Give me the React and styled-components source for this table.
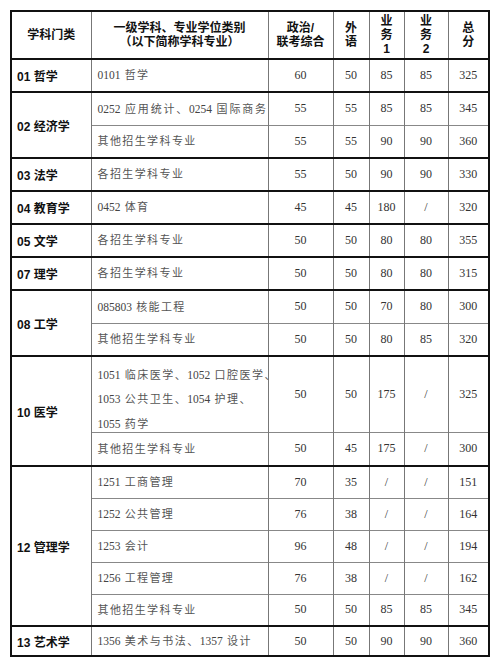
import React from 'react';
import styled, { createGlobalStyle } from 'styled-components';

const Global = createGlobalStyle`
  html, body { margin: 0; padding: 0; background: #fff; }
  body { width: 500px; height: 669px; overflow: hidden; }
`;

const Page = styled.div`
  padding: 10px 0 0 10px;
  background: #fff;
`;

const Table = styled.table`
  border-collapse: collapse;
  table-layout: fixed;
  width: 478px;
  border: 2px solid #111;
`;

const HeadCell = styled.th`
  font-family: "Liberation Sans", "Noto Sans CJK SC", sans-serif;
  font-weight: 700;
  font-size: 12px;
  line-height: 14px;
  color: #111;
  text-align: center;
  vertical-align: middle;
  padding: 0;
  border-left: 1px solid #777;
  border-right: 1px solid #777;
  border-bottom: 2px solid #111;
`;

const Row = styled.tr`
  height: ${p => p.$h}px;
`;

const GroupCell = styled.td`
  font-family: "Liberation Sans", "Noto Sans CJK SC", sans-serif;
  font-weight: 700;
  font-size: 12px;
  color: #111;
  text-align: left;
  vertical-align: middle;
  padding: 0 0 0 5px;
  border-top: 2px solid #111;
  border-right: 1px solid #777;
  white-space: nowrap;
`;

const NameCell = styled.td`
  font-family: "Liberation Serif", "Noto Sans CJK SC", serif;
  font-size: 11px;
  letter-spacing: ${p => p.$ls}px;
  color: #555;
  text-align: left;
  vertical-align: middle;
  padding: 0 0 0 6px;
  white-space: nowrap;
  border-top: ${p => (p.$first ? '2px solid #111' : '1px solid #888')};
  border-left: 1px solid #777;
  border-right: 1px solid #777;
  line-height: 24.5px;
`;

const Code = styled.span`
  letter-spacing: 0;
  font-size: 11.5px;
  color: #444;
`;

const Lines = styled.div`
  margin: 5px 0 -5px;
`;

const Line = styled.div`
  height: 24.5px;
`;

const NumCell = styled.td`
  font-family: "Liberation Serif", serif;
  font-size: 12px;
  color: #333;
  text-align: center;
  vertical-align: middle;
  padding: 0;
  border-top: ${p => (p.$first ? '2px solid #111' : '1px solid #888')};
  border-left: 1px solid #777;
  border-right: 1px solid #777;
`;

const Col = styled.col`
  width: ${p => p.$w}px;
`;

const groups = [
  { name: '01 哲学', rows: [['0101 哲学', 60, 50, 85, 85, 325]] },
  {
    name: '02 经济学',
    rows: [
      ['0252 应用统计、0254 国际商务', 55, 55, 85, 85, 345, 1.8],
      ['其他招生学科专业', 55, 55, 90, 90, 360],
    ],
  },
  { name: '03 法学', rows: [['各招生学科专业', 55, 50, 90, 90, 330]] },
  { name: '04 教育学', rows: [['0452 体育', 45, 45, 180, '/', 320]] },
  { name: '05 文学', rows: [['各招生学科专业', 50, 50, 80, 80, 355]] },
  { name: '07 理学', rows: [['各招生学科专业', 50, 50, 80, 80, 315]] },
  {
    name: '08 工学',
    rows: [
      ['085803 核能工程', 50, 50, 70, 80, 300],
      ['其他招生学科专业', 50, 50, 80, 85, 320],
    ],
  },
  {
    name: '10 医学',
    rows: [
      [['1051 临床医学、1052 口腔医学、', '1053 公共卫生、1054 护理、', '1055 药学'], 50, 50, 175, '/', 325, 1.5],
      ['其他招生学科专业', 50, 45, 175, '/', 300],
    ],
    heights: [76, 34],
  },
  {
    name: '12 管理学',
    rows: [
      ['1251 工商管理', 70, 35, '/', '/', 151],
      ['1252 公共管理', 76, 38, '/', '/', 164],
      ['1253 会计', 96, 48, '/', '/', 194],
      ['1256 工程管理', 76, 38, '/', '/', 162],
      ['其他招生学科专业', 50, 50, 85, 85, 345],
    ],
    heights: [32, 32, 32, 32, 32],
  },
  { name: '13 艺术学', rows: [['1356 美术与书法、1357 设计', 50, 50, 90, 90, 360, 1.5]], heights: [30] },
];

const renderText = s =>
  s.split(/(\d+)/).map((part, i) =>
    /^\d+$/.test(part) ? <Code key={i}>{part}</Code> : part
  );

export default function App() {
  return (
    <Page>
      <Global />
      <Table>
        <colgroup>
          <Col $w={80} />
          <Col $w={177} />
          <Col $w={65} />
          <Col $w={36} />
          <Col $w={35} />
          <Col $w={44} />
          <Col $w={41} />
        </colgroup>
        <thead>
          <Row $h={48}>
            <HeadCell>学科门类</HeadCell>
            <HeadCell>一级学科、专业学位类别<br />（以下简称学科专业）</HeadCell>
            <HeadCell>政治/<br />联考综合</HeadCell>
            <HeadCell>外<br />语</HeadCell>
            <HeadCell>业<br />务<br />1</HeadCell>
            <HeadCell>业<br />务<br />2</HeadCell>
            <HeadCell>总<br />分</HeadCell>
          </Row>
        </thead>
        <tbody>
          {groups.map(g =>
            g.rows.map((r, i) => {
              const [name, a, b, c, d, e, ls] = r;
              const h = g.heights ? g.heights[i] : 33;
              return (
                <Row key={g.name + i} $h={h}>
                  {i === 0 && <GroupCell rowSpan={g.rows.length}>{g.name}</GroupCell>}
                  <NameCell $first={i === 0} $ls={ls ?? 1.4}>
                    {Array.isArray(name) ? (
                      <Lines>{name.map(l => <Line key={l}>{renderText(l)}</Line>)}</Lines>
                    ) : (
                      renderText(name)
                    )}
                  </NameCell>
                  {[a, b, c, d, e].map((v, k) => (
                    <NumCell key={k} $first={i === 0}>{v}</NumCell>
                  ))}
                </Row>
              );
            })
          )}
        </tbody>
      </Table>
    </Page>
  );
}
